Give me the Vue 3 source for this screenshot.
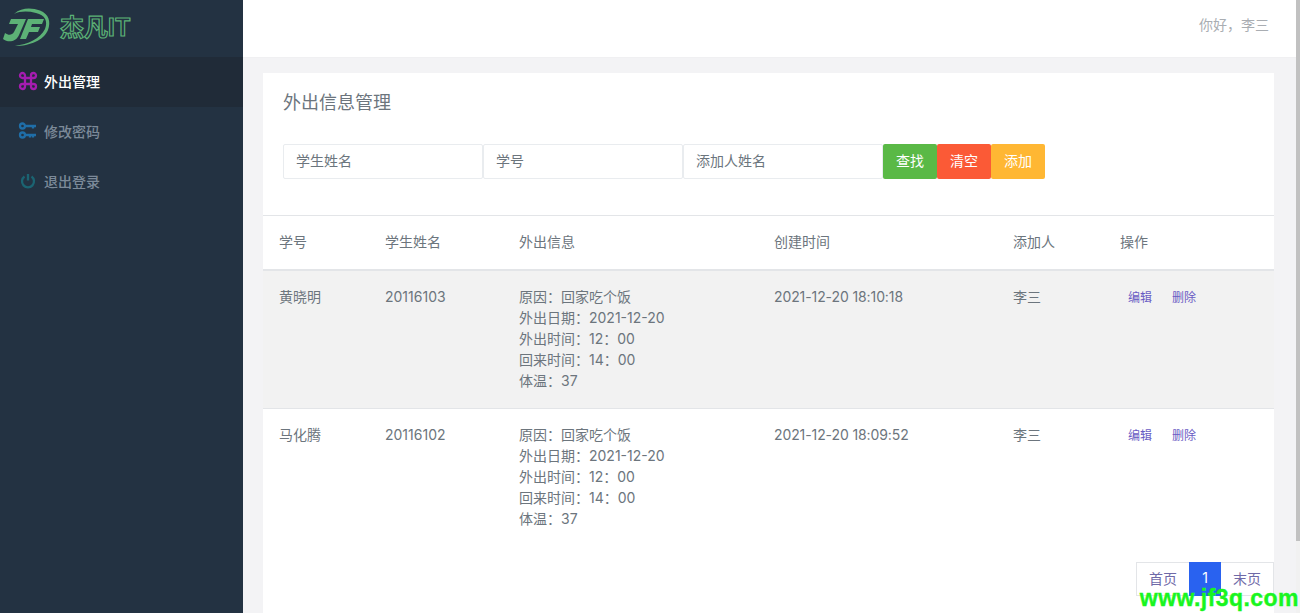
<template>
  <div class="page">
    <aside class="sidebar">
      <div class="brand">
        <svg class="brand-logo" width="52" height="46" viewBox="0 0 52 46">
          <path d="M14 12C22 5 32 6 40 8.500C49 12 51 20 48 28C44 38 30 44 15 44C28 42 40 37 45 27C48 19 45 13 36 11C28 9 20 9 14 12Z" fill="#5cb176" />
          <path d="M11 17H26L19 33C16 40 8 41 3 37L5 31C9 34 12 33 14 30L18 22H9Z" fill="#5cb176" />
          <path d="M28 17H44L42 22H32L31 25H40L38 30H29L26 37H20Z" fill="#5cb176" />
        </svg>
        <span class="brand-name">杰凡IT</span>
      </div>
      <nav class="menu">
        <a v-for="item in menu" :key="item.label" class="menu-item" :class="{ active: item.active }">
          <svg class="menu-icon" :style="{ color: item.color }" width="20" height="20" viewBox="0 0 20 20" fill="none" stroke="currentColor" stroke-width="2.300">
            <path v-for="(d, i) in item.paths" :key="i" :d="d" />
          </svg>
          <span>{{ item.label }}</span>
        </a>
      </nav>
    </aside>

    <div class="right">
      <header class="topbar">你好，李三</header>
      <main class="content">
        <section class="card">
          <h2 class="card-title">外出信息管理</h2>
          <div class="search">
            <input class="field" placeholder="学生姓名" />
            <input class="field" placeholder="学号" />
            <input class="field" placeholder="添加人姓名" />
            <button class="btn green">查找</button>
            <button class="btn red">清空</button>
            <button class="btn orange">添加</button>
          </div>
          <table class="list">
            <colgroup>
              <col v-for="w in widths" :key="w" :style="{ width: w + 'px' }" />
            </colgroup>
            <thead>
              <tr>
                <th>学号</th>
                <th>学生姓名</th>
                <th>外出信息</th>
                <th>创建时间</th>
                <th>添加人</th>
                <th>操作</th>
              </tr>
            </thead>
            <tbody>
              <tr v-for="(row, index) in rows" :key="row.no" :class="{ odd: index === 0 }">
                <td>{{ row.name }}</td>
                <td>{{ row.no }}</td>
                <td>
                  <div v-for="line in row.info" :key="line">{{ line }}</div>
                </td>
                <td class="time">{{ row.time }}</td>
                <td>{{ row.adder }}</td>
                <td class="ops"><a>编辑</a><a>删除</a></td>
              </tr>
            </tbody>
          </table>
          <div class="pager">
            <a>首页</a>
            <a class="current">1</a>
            <a>末页</a>
          </div>
        </section>
      </main>
    </div>
    <div class="scrollbar"><div class="thumb"></div></div>
    <div class="watermark">www.jf3q.com</div>
  </div>
</template>

<script setup>
const menu = [
  {
    label: '外出管理',
    active: true,
    color: '#a51cb0',
    paths: ['M7 7H13V13H7ZM7 7H4.500A2.500 2.500 0 1 1 7 4.500ZM13 7V4.500A2.500 2.500 0 1 1 15.500 7ZM13 13H15.500A2.500 2.500 0 1 1 13 15.500ZM7 13V15.500A2.500 2.500 0 1 1 4.500 13Z']
  },
  {
    label: '修改密码',
    color: '#1f6ea8',
    paths: [
      'M4.500 2.500A2.500 2.500 0 1 0 4.500 7.500A2.500 2.500 0 1 0 4.500 2.500ZM7 5H18M15 5V7.500',
      'M4.500 11.500A2.500 2.500 0 1 0 4.500 16.500A2.500 2.500 0 1 0 4.500 11.500ZM7 14H18M12 14V16.500M15 14V16.500'
    ]
  },
  {
    label: '退出登录',
    color: '#1b6472',
    paths: ['M10 3V9.500', 'M6.500 5.500A6 6 0 1 0 13.500 5.500']
  }
]

const widths = [106, 134, 255, 239, 107, 170]

const info = ['原因：回家吃个饭', '外出日期：2021-12-20', '外出时间：12：00', '回来时间：14：00', '体温：37']

const rows = [
  { name: '黄晓明', no: '20116103', info, time: '2021-12-20 18:10:18', adder: '李三' },
  { name: '马化腾', no: '20116102', info, time: '2021-12-20 18:09:52', adder: '李三' }
]
</script>

<style>
body {
  overflow: hidden;
}
</style>

<style scoped>
.page {
  position: relative;
  display: flex;
  width: 1300px;
  height: 613px;
  overflow: hidden;
  background: #f3f3f5;
  font-family: Inter, "Noto Sans CJK SC", sans-serif;
  font-size: 14px;
  color: #6c757d;
}

.sidebar {
  flex: 0 0 243px;
  background: #233242;
}

.brand {
  display: flex;
  align-items: center;
  height: 57px;
  padding: 0 0 7px 0;
  box-sizing: border-box;
}

.brand-name {
  margin-left: 8px;
  font-size: 24px;
  font-weight: 700;
  color: #233242;
  -webkit-text-stroke: 1.200px #5cb176;
}

.menu-item {
  display: flex;
  align-items: center;
  height: 50px;
  padding: 0 0 2px 18px;
  box-sizing: border-box;
  color: #7c8a99;
  font-weight: 500;
}

.menu-item.active {
  background: #202b38;
  color: #fff;
}

.menu-icon {
  margin-right: 6px;
}

.right {
  flex: 1;
  min-width: 0;
}

.topbar {
  height: 58px;
  padding: 0 27px 10px 0;
  box-sizing: border-box;
  display: flex;
  align-items: center;
  justify-content: flex-end;
  background: #fff;
  border-bottom: 1px solid #f0f0f2;
  color: #a9adb2;
}

.content {
  padding: 15px 22px 0 20px;
}

.card {
  background: #fff;
  height: 560px;
}

.card-title {
  margin: 0;
  padding: 18px 20px 0;
  font-size: 18px;
  line-height: 24px;
  font-weight: 400;
  color: #6c757d;
}

.search {
  display: flex;
  padding: 29px 20px 36px;
}

.field {
  width: 200px;
  height: 35px;
  box-sizing: border-box;
  padding: 0 12px 2px;
  border: 1px solid #e9ecef;
  border-radius: 2px;
  outline: none;
  font: inherit;
  color: #6c757d;
}

.field::placeholder {
  color: #6c757d;
}

.btn {
  width: 54px;
  height: 35px;
  padding: 0 0 3px;
  border: none;
  border-radius: 2px;
  color: #fff;
  font: inherit;
}

.green {
  background: #5ab946;
}

.red {
  background: #fb5a36;
}

.orange {
  background: #ffb733;
}

.list {
  width: 1011px;
  table-layout: fixed;
  border-collapse: collapse;
}

.list th {
  height: 54px;
  padding: 0 16px 2px;
  box-sizing: border-box;
  text-align: left;
  font-weight: 400;
  border-top: 1px solid #e3e5e8;
  border-bottom: 2px solid #e3e5e8;
}

.list td {
  box-sizing: border-box;
  padding: 15px 16px 17px;
  line-height: 21px;
  vertical-align: top;
  border-bottom: 1px solid #e3e5e8;
}

.list tbody tr:last-child td {
  border-bottom: none;
}

.odd td {
  background: #f2f2f2;
}

.list .time {
  letter-spacing: -0.100px;
}

.list .ops {
  padding: 16px 0 0 24px;
  font-size: 12px;
  color: #6a5cc4;
}

.ops a {
  margin-right: 20px;
}

.pager {
  display: flex;
  justify-content: flex-end;
  margin-top: 16px;
}

.pager a {
  width: 46px;
  height: 34px;
  padding-bottom: 2px;
  display: flex;
  align-items: center;
  justify-content: center;
  box-sizing: border-box;
  border: 1px solid #e3e5e8;
  color: #6f6aa8;
}

.pager a:first-child {
  width: 53px;
  border-right: none;
}

.pager a:last-child {
  width: 53px;
  border-left: none;
}

.pager .current {
  width: 32px;
  border-color: #2962f0;
  background: #2962f0;
  color: #fff;
}

.scrollbar {
  flex: 0 0 4px;
  background: #f1f1f1;
}

.thumb {
  height: 541px;
  background: #c1c1c1;
}

.watermark {
  position: absolute;
  right: 1px;
  bottom: 3px;
  font-family: "Liberation Sans", sans-serif;
  font-size: 23px;
  line-height: 24px;
  font-weight: 700;
  color: #19f520;
  letter-spacing: 0.450px;
  -webkit-text-stroke: 0.400px #19f520;
}
</style>
